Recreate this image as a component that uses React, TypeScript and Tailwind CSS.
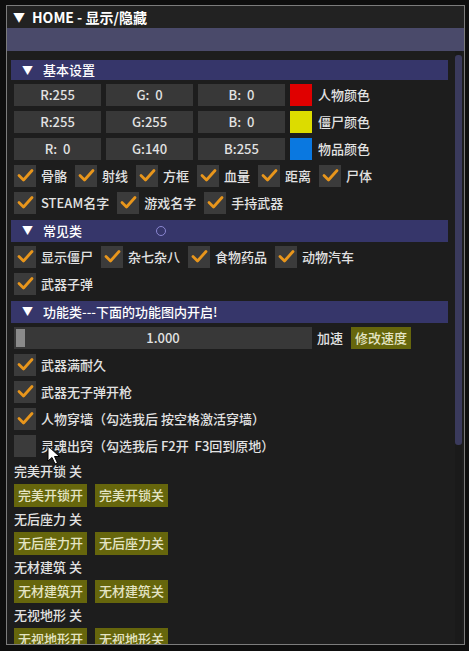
import React from 'react';

const font = { fontFamily: '"Noto Sans CJK SC", "Noto Sans", sans-serif' };

function Check({ on }: { on: boolean }) {
  return (
    <div className="w-[22px] h-[22px] bg-[#3b3b3b] flex items-center justify-center shrink-0">
      {on && (
        <svg width="17" height="15" viewBox="0 0 17 15">
          <path d="M2 7.5 L6.5 12 L15 2.5" fill="none" stroke="#e8961c" strokeWidth="2.8" strokeLinecap="round" strokeLinejoin="round" />
        </svg>
      )}
    </div>
  );
}

function CheckItem({ label, on = true }: { label: string; on?: boolean }) {
  return (
    <div className="flex items-center gap-[5px]">
      <Check on={on} />
      <span className="whitespace-pre">{label}</span>
    </div>
  );
}

function Header({ title, children }: { title: string; children?: React.ReactNode }) {
  return (
    <div className="relative h-[22px] w-[437px] bg-[#36366a] flex items-center pl-[11px] text-white">
      <span className="text-[11px] w-[11px]">▼</span>
      <span className="ml-[10px]">{title}</span>
      {children}
    </div>
  );
}

function ColorRow({ r, g, b, color, label }: { r: string; g: string; b: string; color: string; label: string }) {
  return (
    <div className="flex items-center">
      <div className="w-[87px] h-[22px] bg-[#383838] flex items-center justify-center whitespace-pre">{r}</div>
      <div className="w-[87px] h-[22px] bg-[#383838] flex items-center justify-center whitespace-pre ml-[5px]">{g}</div>
      <div className="w-[87px] h-[22px] bg-[#383838] flex items-center justify-center whitespace-pre ml-[5px]">{b}</div>
      <div className="w-[22px] h-[22px] ml-[5px]" style={{ background: color }} />
      <span className="ml-[6px]">{label}</span>
    </div>
  );
}

function Btn({ label }: { label: string }) {
  return (
    <div className="h-[23px] px-[4px] bg-[#66660c] text-[#e4e4c4] flex items-center whitespace-nowrap">{label}</div>
  );
}

function Toggle({ name }: { name: string }) {
  return (
    <>
      <div className="h-[17px] flex items-center">{name} 关</div>
      <div className="flex gap-[8px]">
        <Btn label={name + '开'} />
        <Btn label={name + '关'} />
      </div>
    </>
  );
}

export default function App() {
  return (
    <div className="w-[469px] h-[651px] bg-[#0e0e0e] pt-[5px] pl-[6px] overflow-hidden text-[13px] font-medium text-[#e2e2e2]" style={font}>
      <div className="relative w-[459px] h-[640px] border border-[#7c7c7c] bg-[#1d1d1d] flex flex-col overflow-hidden">
        {/* title */}
        <div className="h-[22px] bg-[#222222] flex items-center pl-[6px] text-white shrink-0">
          <span className="text-[12px]">▼</span>
          <span className="ml-[7px] font-bold text-[14px]">HOME - 显示/隐藏</span>
        </div>
        {/* menu bar */}
        <div className="h-[23px] bg-[#4a4a6a] shrink-0" />

        <div className="flex flex-1 min-h-0">
          <div className="flex-1 pl-[4px] pt-[9px] flex flex-col gap-[4px] overflow-hidden">
            <Header title="基本设置" />
            <div className="pl-[3px] flex flex-col gap-[5px]">
              <ColorRow r="R:255" g="G:  0" b="B:  0" color="#e00000" label="人物颜色" />
              <ColorRow r="R:255" g="G:255" b="B:  0" color="#dcdc00" label="僵尸颜色" />
              <ColorRow r="R:  0" g="G:140" b="B:255" color="#0a78e0" label="物品颜色" />
              <div className="flex gap-[8px]">
                <CheckItem label="骨骼" />
                <CheckItem label="射线" />
                <CheckItem label="方框" />
                <CheckItem label="血量" />
                <CheckItem label="距离" />
                <CheckItem label="尸体" />
              </div>
              <div className="flex gap-[8px]">
                <CheckItem label="STEAM名字" />
                <CheckItem label="游戏名字" />
                <CheckItem label="手持武器" />
              </div>
            </div>
            <div className="mt-[2px]">
              <Header title="常见类">
                <div className="absolute left-[145px] top-[6px] w-[10px] h-[10px] rounded-full border border-[#8a86d0]" />
              </Header>
            </div>
            <div className="pl-[3px] flex flex-col gap-[5px]">
              <div className="flex gap-[8px]">
                <CheckItem label="显示僵尸" />
                <CheckItem label="杂七杂八" />
                <CheckItem label="食物药品" />
                <CheckItem label="动物汽车" />
              </div>
              <div className="flex gap-[8px]">
                <CheckItem label="武器子弹" />
              </div>
            </div>
            <div className="mt-[2px]">
              <Header title="功能类---下面的功能图内开启!" />
            </div>
            <div className="pl-[3px] flex flex-col gap-[5px]">
              <div className="flex items-center">
                <div className="relative w-[298px] h-[22px] bg-[#383838] flex items-center justify-center">
                  <div className="absolute left-[2px] top-[2px] w-[9px] h-[18px] bg-[#8a8a8a]" />
                  <span>1.000</span>
                </div>
                <span className="ml-[5px]">加速</span>
                <div className="ml-[8px] h-[22px] px-[4px] bg-[#66660c] text-[#e4e4c4] flex items-center">修改速度</div>
              </div>
              <CheckItem label="武器满耐久" />
              <CheckItem label="武器无子弹开枪" />
              <CheckItem label="人物穿墙（勾选我后 按空格激活穿墙）" />
              <CheckItem label="灵魂出窍（勾选我后 F2开  F3回到原地）" on={false} />
              <div className="flex flex-col gap-[4px] mt-[1px]">
                <Toggle name="完美开锁" />
                <Toggle name="无后座力" />
                <Toggle name="无材建筑" />
                <Toggle name="无视地形" />
              </div>
            </div>
          </div>
          {/* scrollbar */}
          <div className="w-[7px] mr-[2px] ml-[7px] pt-[4px] bg-[#1a1a1a]">
            <div className="h-[390px] bg-[#3a3a5c] rounded-[3px]" />
          </div>
        </div>

        {/* mouse cursor */}
        <svg className="absolute left-[40px] top-[439px]" width="14" height="20" viewBox="0 0 14 20">
          <path d="M1 1 L1 16 L5 12.5 L8 19 L10.5 18 L7.5 11.5 L12.5 11.5 Z" fill="#ffffff" stroke="#000000" strokeWidth="1" />
        </svg>
      </div>
    </div>
  );
}
